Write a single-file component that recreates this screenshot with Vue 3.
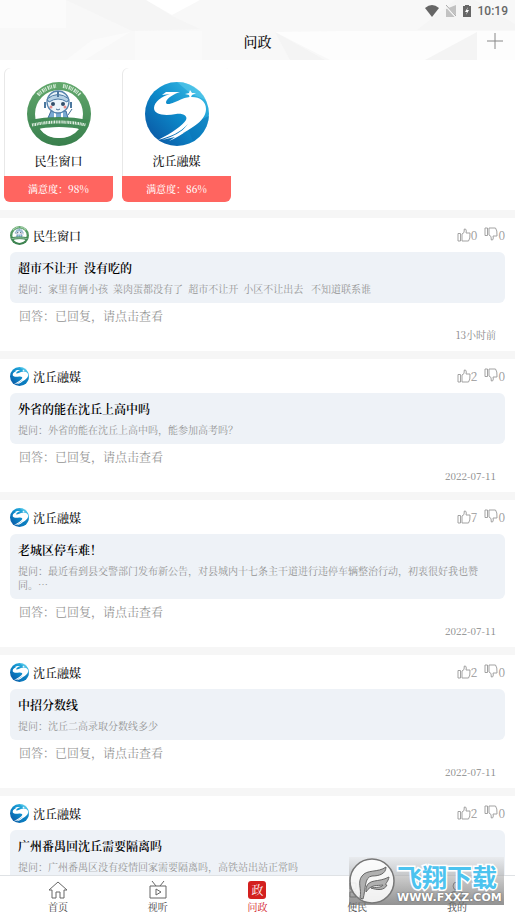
<template>
  <div class="page">
    <svg class="defs" aria-hidden="true">
      <defs>
        <linearGradient id="sea" x1="1" y1="0" x2="0" y2="1">
          <stop offset="0" stop-color="#45c8ec" />
          <stop offset="0.5" stop-color="#0c8aca" />
          <stop offset="1" stop-color="#0a4d9c" />
        </linearGradient>
        <linearGradient id="leaf" x1="0" y1="0" x2="0" y2="1">
          <stop offset="0" stop-color="#62a86c" />
          <stop offset="1" stop-color="#397f4d" />
        </linearGradient>
      </defs>
      <symbol id="logo-window" viewBox="0 0 64 64">
        <circle cx="32" cy="32" r="32" fill="url(#leaf)" />
        <circle cx="32" cy="32" r="24" fill="#fff" />
        <path d="M24 29 L21 36 H41 L39 29 Z" fill="#78a9d2" stroke="#426d9d" />
        <path d="M28 30 V36 M35 30 V36" stroke="#fff" stroke-width="2" />
        <circle cx="31" cy="20" r="11" fill="#edf5fa" stroke="#5684ad" stroke-width="1.3" />
        <path d="M20 17 Q31 8 42 17 L40 20 Q31 14 22 20 Z" fill="#b7d2e5" stroke="#4e7ca6" />
        <path d="M31 9 V15 M18 20 V26 M44 20 V26" stroke="#4c789f" stroke-width="2" />
        <circle cx="26" cy="22" r="2" fill="#334f69" />
        <circle cx="36" cy="22" r="2" fill="#334f69" />
        <circle cx="24" cy="25" r="1.5" fill="#e68e8c" />
        <circle cx="38" cy="25" r="1.5" fill="#e68e8c" />
        <path d="M29 27 Q31 29 33 27 M41 33 L45 27" fill="none" stroke="#477197" />
        <path d="M2 38 Q32 32 62 38 L59 48 Q32 42 5 48 Z" fill="#438b56" />
        <path d="M13 47 Q32 44 52 47 Q45 56 32 56 Q19 56 13 47 Z" fill="#fff" />
        <path
          d="M11 13 A28 28 0 0 1 29 4 M36 4 A28 28 0 0 1 53 13"
          fill="none"
          stroke="#d5ead7"
          stroke-width="4"
          stroke-dasharray="1.5 0.6 0.8 0.7 1 1.3"
        />
        <path
          d="M5 43 Q32 37 59 43"
          fill="none"
          stroke="#e3f0e4"
          stroke-width="3"
          stroke-dasharray="1 0.6 0.7 0.5 1.3 0.7"
        />
      </symbol>
      <symbol id="logo-media" viewBox="0 0 64 64">
        <circle cx="32" cy="32" r="32" fill="url(#sea)" />
        <path d="M32 0 L46 12 L61 18 A32 32 0 0 0 32 0 Z" fill="#62d0ee" opacity="0.5" />
        <path d="M64 34 L42 44 L48 59 A32 32 0 0 0 64 34 Z" fill="#0a6fb4" opacity="0.5" />
        <path
          d="M17 13 L21 10 H35 C29 12 22 16 21 20 C21 25 30 20 37 17 C50 12 61 17 61 27 C61 38 48 46 34 53 L43 42 C36 50 25 55 13 58 C27 51 38 43 41 38 C43 34 38 31 31 32 C20 34 9 33 9 26 C9 20 17 14 25 12 Z"
          fill="#fff"
        />
        <path d="M17 58 Q34 53 43 43 L38 51 L44 47 Q34 55 24 59 L30 55 Z" fill="#fff" />
        <path d="M45 8 L47 11 L51 11 L47 13 L45 17 L44 13 L40 12 L44 11 Z" fill="#fff" />
      </symbol>
      <symbol id="thumb" viewBox="0 0 14 14">
        <path
          d="M1 5.5 H3.5 V13 H1 Z M5 6 L7 4.5 L7.3 1 Q9.3 0.5 9.3 3 L9 5 H13 L12.8 10 L11.5 13 H5 Z"
          fill="none"
          stroke="#999"
          stroke-width="0.9"
          stroke-linejoin="round"
        />
      </symbol>
    </svg>

    <header class="header">
      <svg class="header__bg" viewBox="0 0 515 60" preserveAspectRatio="none" aria-hidden="true">
        <rect width="515" height="60" fill="#f8f8f8" />
        <path d="M0 0 H66 V28 H0 Z M92 40 L66 60 H85 L130 32 Z" fill="#fbfbfb" />
        <path d="M66 0 L132 31 L200 29 L172 16 L146 0 Z" fill="#f5f5f5" />
        <path d="M146 0 L172 15 L200 0 Z" fill="#fff" />
        <path d="M135 31 H202 V60 H135 Z" fill="#fafafa" />
        <path d="M345 31 H515 V60 H425 L477 31 L430 60 H330 L275 32 Z" fill="#fdfdfd" />
        <path d="M425 60 L477 32 V60 Z M275 32 L325 60 H290 Z" fill="#f4f4f4" />
        <path d="M417 30 L455 0 H475 L515 24 V30 Z" fill="#f5f5f5" />
      </svg>
      <div class="status">
        <svg width="14" height="12" viewBox="0 0 14 12"><path d="M0 3 Q7 -3 14 3 L7 12 Z" fill="#666" /></svg>
        <svg width="10" height="12" viewBox="0 0 10 12">
          <path d="M10 0 V12 H0 V4 Z" fill="#c2c2c2" />
          <path d="M0 1 L10 12" stroke="#f5f5f5" stroke-width="2" />
          <path d="M0 0 L10 11" stroke="#aaa" />
        </svg>
        <svg width="8" height="12" viewBox="0 0 8 12">
          <path d="M2 0 H6 V1 H8 V12 H0 V1 H2 Z" fill="#666" />
          <path d="M5 2 L2 7 H4 L3 10 L6 5 H4 Z" fill="#fff" />
        </svg>
        <span>10:19</span>
      </div>
      <div class="titlebar">
        <h1>问政</h1>
        <button class="add" aria-label="新增">
          <svg width="16" height="16" viewBox="0 0 16 16"><path d="M8 0 V16 M0 8 H16" stroke="#888" /></svg>
        </button>
      </div>
    </header>

    <main class="content">
      <section class="units">
        <article v-for="unit in units" :key="unit.name" class="unit">
          <svg class="unit__logo"><use :href="unit.logo" /></svg>
          <h2>{{ unit.name }}</h2>
          <p>满意度：{{ unit.rate }}%</p>
        </article>
      </section>

      <article v-for="post in posts" :key="post.title" class="post">
        <div class="post__head">
          <svg class="post__logo"><use :href="post.logo" /></svg>
          <span class="post__name">{{ post.name }}</span>
          <button class="vote" aria-label="赞">
            <svg><use href="#thumb" /></svg>{{ post.up }}
          </button>
          <button class="vote vote--down" aria-label="踩">
            <svg><use href="#thumb" /></svg>0
          </button>
        </div>
        <div class="post__box">
          <h3>{{ post.title }}</h3>
          <p>提问：{{ post.question }}</p>
        </div>
        <p class="post__answer">回答：已回复，请点击查看</p>
        <time class="post__time">{{ post.time }}</time>
      </article>
    </main>

    <nav class="tabs">
      <a href="#home" class="tab">
        <svg viewBox="0 0 20 20"><path d="M1 10 L10 2 L19 10 H16 V18 H12 V12 H8 V18 H4 V10 Z" /></svg>
        <span>首页</span>
      </a>
      <a href="#video" class="tab">
        <svg viewBox="0 0 20 20"><path d="M2 6 H18 V18 H2 Z M4 1 L8 6 M16 1 L12 6 M8 9 L13 12 L8 15 Z" /></svg>
        <span>视听</span>
      </a>
      <a href="#ask" class="tab tab--active">
        <span class="tab__badge">政</span>
        <span>问政</span>
      </a>
      <a href="#service" class="tab">
        <svg viewBox="0 0 20 20"><path d="M3 3 H9 V9 H3 Z M12 3 H17 V9 H12 Z M3 12 H9 V17 H3 Z M12 12 H17 V17 H12 Z" /></svg>
        <span>便民</span>
      </a>
      <a href="#mine" class="tab">
        <svg viewBox="0 0 20 20"><circle cx="10" cy="6" r="4" /><path d="M2 18 Q3 11 10 11 Q17 11 18 18 Z" /></svg>
        <span>我的</span>
      </a>
    </nav>

    <div class="watermark">
      <svg class="watermark__logo" viewBox="0 0 46 46">
        <circle cx="23" cy="23" r="22" fill="#fff" fill-opacity="0.85" stroke="#777" stroke-width="1.5" />
        <path
          d="M11 40 C13 31 8 24 13 18 C18 11 29 15 37 9 C37 16 30 18 23 18 C15 19 17 31 14 41 Z"
          fill="#b0b0b0"
          stroke="#666"
        />
        <path
          d="M17 30 C20 20 29 25 40 19 C39 25 34 27 38 27 C35 33 28 32 22 30 C26 29 33 30 34 27 C28 28 22 26 17 34 Z"
          fill="#b0b0b0"
          stroke="#666"
        />
      </svg>
      <div class="watermark__text">
        <strong>飞翔下载</strong>
        <span>WWW.FXXZ.COM</span>
      </div>
    </div>
  </div>
</template>

<script setup>
const units = [
  { name: '民生窗口', rate: 98, logo: '#logo-window' },
  { name: '沈丘融媒', rate: 86, logo: '#logo-media' },
]

const posts = [
  {
    name: '民生窗口',
    logo: '#logo-window',
    up: 0,
    title: '超市不让开  没有吃的',
    question: '家里有俩小孩  菜肉蛋都没有了  超市不让开  小区不让出去   不知道联系谁',
    time: '13小时前',
  },
  {
    name: '沈丘融媒',
    logo: '#logo-media',
    up: 2,
    title: '外省的能在沈丘上高中吗',
    question: '外省的能在沈丘上高中吗，能参加高考吗？',
    time: '2022-07-11',
  },
  {
    name: '沈丘融媒',
    logo: '#logo-media',
    up: 7,
    title: '老城区停车难！',
    question: '最近看到县交警部门发布新公告，对县城内十七条主干道进行违停车辆整治行动，初衷很好我也赞同。…',
    time: '2022-07-11',
  },
  {
    name: '沈丘融媒',
    logo: '#logo-media',
    up: 2,
    title: '中招分数线',
    question: '沈丘二高录取分数线多少',
    time: '2022-07-11',
  },
  {
    name: '沈丘融媒',
    logo: '#logo-media',
    up: 2,
    title: '广州番禺回沈丘需要隔离吗',
    question: '广州番禺区没有疫情回家需要隔离吗，高铁站出站正常吗',
    time: '2022-07-11',
  },
]
</script>

<style>
body {
  margin: 0;
  background: #fff;
}
</style>

<style scoped>
.page {
  position: relative;
  display: flex;
  flex-direction: column;
  height: 100vh;
  overflow: hidden;
  font-family: 'Noto Serif CJK SC', 'Liberation Serif', 'Noto Sans CJK SC', serif;
  font-size: 12px;
  color: #111;
}

h1,
h2,
h3,
p {
  margin: 0;
  font-weight: 500;
}

button {
  padding: 0;
  border: 0;
  background: none;
  font-family: inherit;
}

.defs {
  position: absolute;
  width: 0;
  height: 0;
}

.header {
  position: relative;
  flex: none;
  height: 60px;
}

.header__bg {
  position: absolute;
  inset: 0;
  width: 100%;
  height: 100%;
}

.status {
  position: relative;
  display: flex;
  align-items: center;
  justify-content: flex-end;
  gap: 7px;
  height: 21px;
  padding-right: 7px;
  font: 500 12px Roboto, sans-serif;
  color: #666;
}

.titlebar {
  position: relative;
  display: grid;
  grid-template-columns: 40px 1fr 40px;
  align-items: center;
  height: 40px;
}

.titlebar h1 {
  grid-column: 2;
  font-size: 14px;
  line-height: 20px;
  text-align: center;
}

.add {
  display: flex;
  justify-content: center;
}

.content {
  flex: 1;
  min-height: 0;
  overflow: hidden;
}

.units {
  display: flex;
  gap: 9px;
  padding: 8px 4px;
}

.unit {
  display: flex;
  flex-direction: column;
  align-items: center;
  width: 109px;
  border-radius: 6px;
  overflow: hidden;
  box-shadow: inset 1px 0 #e8e8e8;
}

.unit__logo {
  width: 64px;
  height: 64px;
  margin-top: 14px;
}

.unit h2 {
  margin: 6px 0;
  font-size: 12px;
  line-height: 18px;
}

.unit p {
  align-self: stretch;
  background: #ff6560;
  font-size: 10px;
  line-height: 26px;
  text-align: center;
  color: #fff;
}

.post {
  display: flex;
  flex-direction: column;
  padding: 7px 10px 9px;
  border-top: 8px solid #f6f6f6;
}

.post__head {
  display: flex;
  align-items: center;
  height: 20px;
}

.post__logo {
  width: 19px;
  height: 19px;
}

.post__name {
  flex: 1;
  margin-left: 4px;
  font-weight: 500;
}

.vote {
  display: flex;
  align-items: center;
  margin-left: 7px;
  font-size: 12px;
  line-height: 16px;
  color: #999;
}

.vote svg {
  width: 14px;
  height: 14px;
}

.vote--down svg {
  margin-bottom: 2px;
  transform: scaleY(-1);
}

.post__box {
  margin-top: 7px;
  padding: 7px 20px 7px 8px;
  border-radius: 6px;
  background: #eef2f7;
  white-space: pre-wrap;
}

.post__box h3 {
  font-size: 12px;
  font-weight: 600;
  line-height: 18px;
  color: #000;
}

.post__box p {
  margin-top: 5px;
  font-size: 10px;
  font-weight: 400;
  line-height: 14px;
  color: #949494;
}

.post__answer {
  margin: 5px 9px 4px;
  font-weight: 400;
  line-height: 16px;
  color: #949494;
}

.post__time {
  align-self: flex-end;
  margin-right: 9px;
  font-size: 10px;
  line-height: 14px;
  color: #888;
}

.tabs {
  display: flex;
  flex: none;
  padding: 4px 8px 3px;
  border-top: 1px solid #dfe2e5;
  background: #fff;
}

.tab {
  display: flex;
  flex: 1;
  flex-direction: column;
  align-items: center;
  font-size: 10px;
  line-height: 14px;
  color: #444;
  text-decoration: none;
}

.tab svg {
  width: 20px;
  height: 20px;
  fill: none;
  stroke: #666;
}

.tab--active {
  color: #d3201f;
}

.tab__badge {
  width: 18px;
  height: 18px;
  margin: 1px;
  border-radius: 3px;
  background: #d3201f;
  font-size: 12px;
  line-height: 18px;
  text-align: center;
  color: #fff;
}

.watermark {
  position: absolute;
  right: 11px;
  bottom: 12px;
  display: flex;
  align-items: center;
  width: 155px;
  height: 48px;
  background: linear-gradient(rgba(225, 225, 225, 0.4), rgba(110, 110, 110, 0.75));
}

.watermark__logo {
  flex: none;
  width: 46px;
  height: 46px;
}

.watermark__text {
  display: flex;
  flex-direction: column;
  margin-left: 2px;
  padding-top: 4px;
  white-space: nowrap;
}

.watermark__text strong {
  font: 700 25px/30px 'Noto Sans CJK SC', sans-serif;
  color: #4cc3ef;
  -webkit-text-stroke: 3px #fff;
  paint-order: stroke fill;
}

.watermark__text span {
  font: 700 11px/14px 'DejaVu Sans', sans-serif;
  color: #fff;
  text-shadow: 0 0 2px #555;
}
</style>
